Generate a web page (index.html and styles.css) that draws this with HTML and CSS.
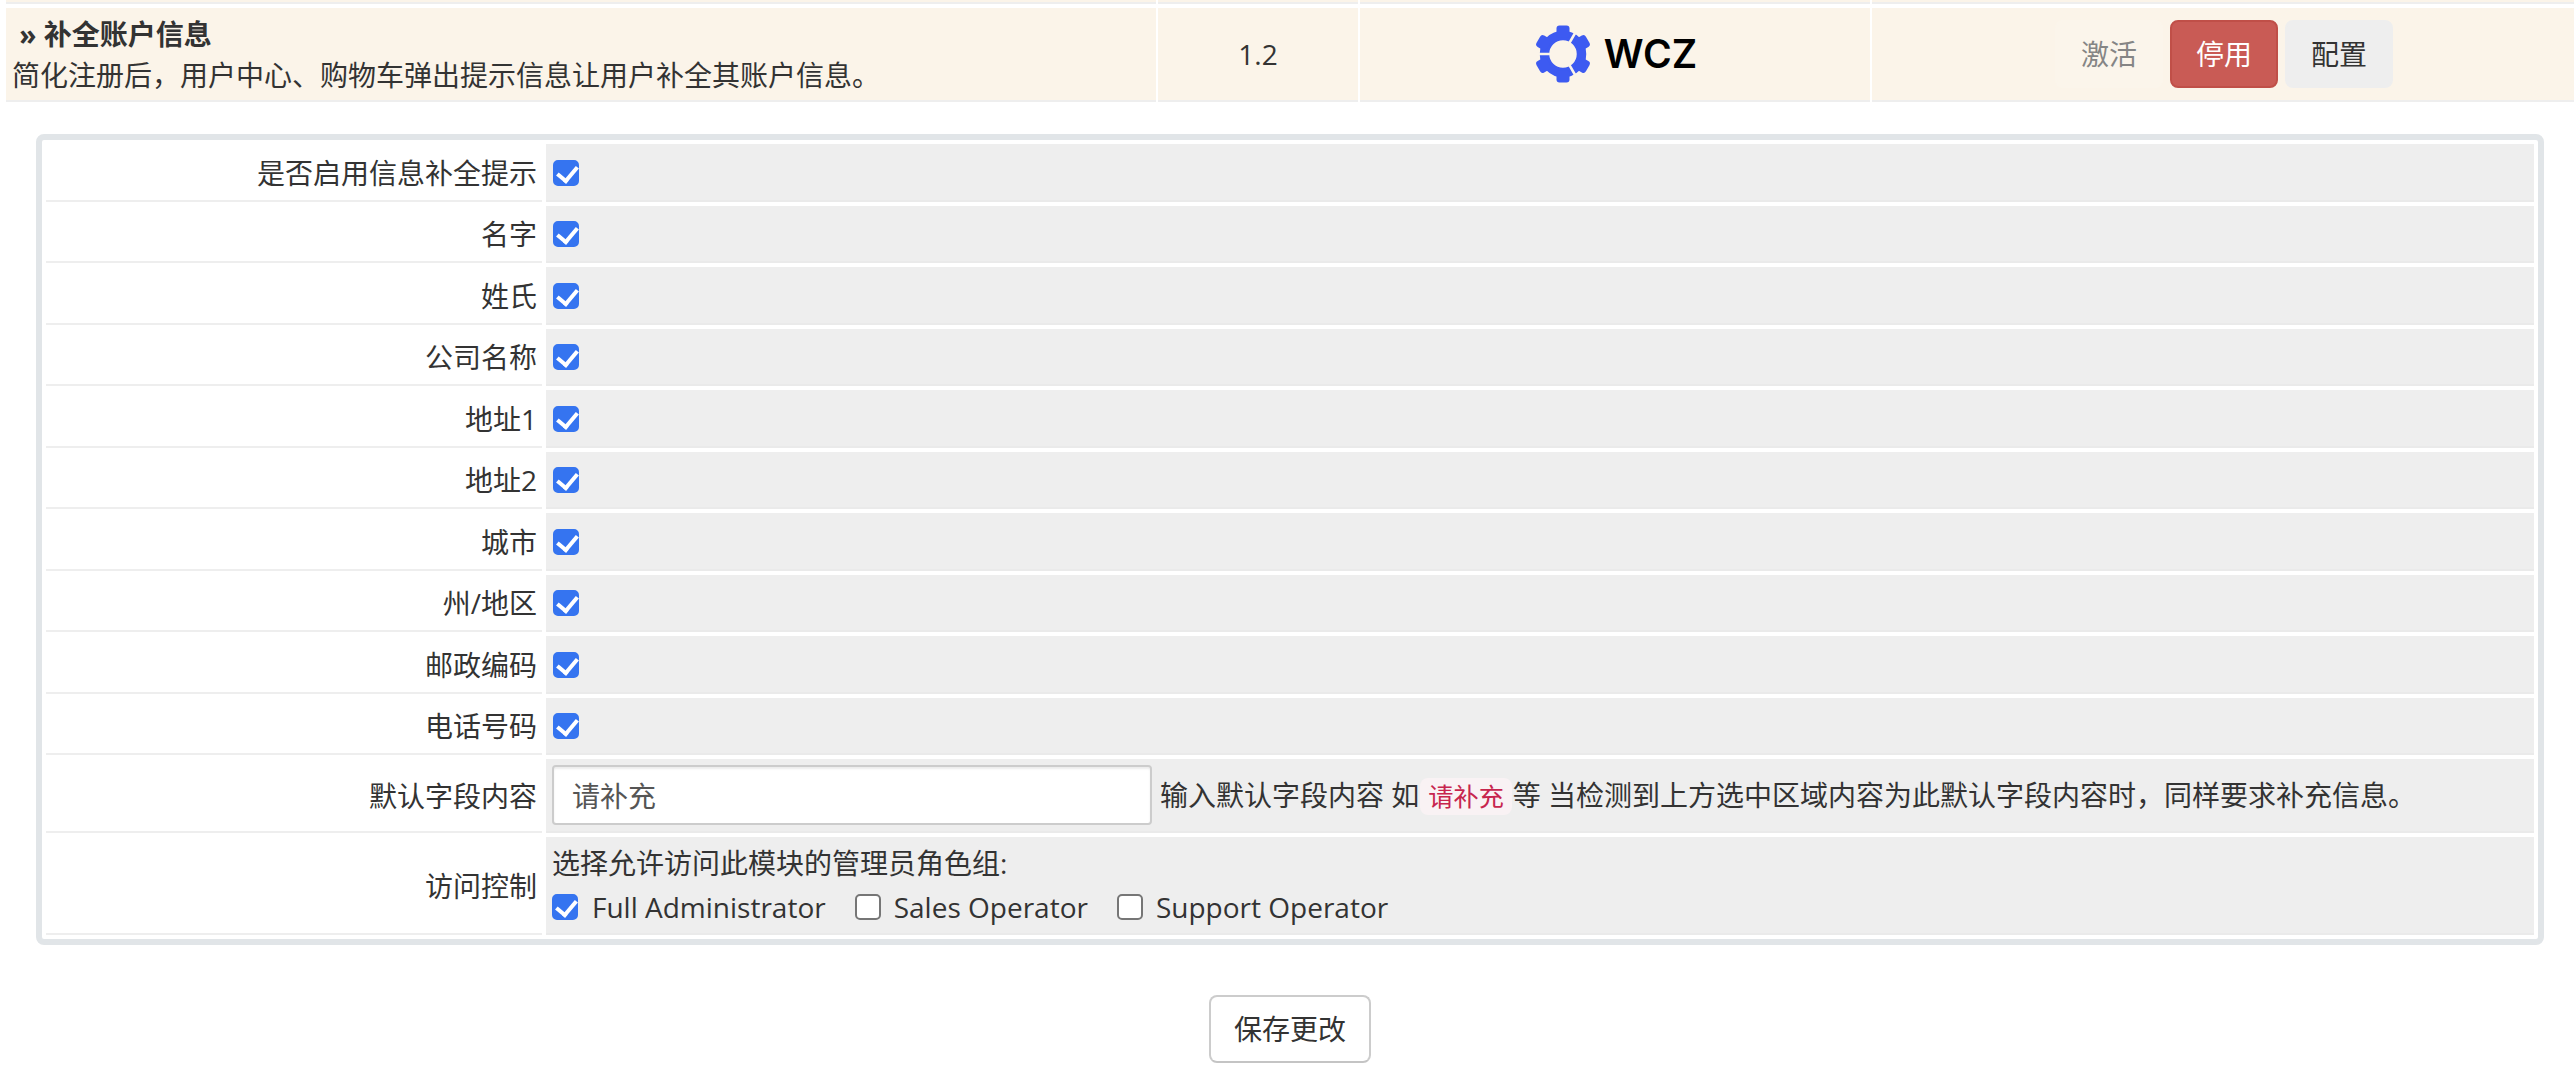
FILE: index.html
```html
<!DOCTYPE html>
<html lang="zh-CN">
<head>
<meta charset="utf-8">
<title>补全账户信息</title>
<link rel="stylesheet" href="styles.css">
</head>
<body>
<div class="module-row module-row-prev">
  <div class="cell"></div><div class="cell"></div><div class="cell"></div><div class="cell"></div>
</div>
<div class="module-row">
  <div class="cell cell-name">
    <div class="module-title">&nbsp;» 补全账户信息</div>
    <div class="module-desc">简化注册后，用户中心、购物车弹出提示信息让用户补全其账户信息。</div>
  </div>
  <div class="cell cell-center">1.2</div>
  <div class="cell cell-center cell-logo">
    <svg class="logo-gear" viewBox="-30 -30 60 60" width="60" height="60" aria-hidden="true">
      <circle class="gear-ring" r="18.5"/>
      <rect class="gear-tooth" x="-6.5" y="-28.5" width="13" height="12" rx="3"/>
      <rect class="gear-tooth" x="-6.5" y="-28.5" width="13" height="12" rx="3" transform="rotate(60)"/>
      <rect class="gear-tooth" x="-6.5" y="-28.5" width="13" height="12" rx="3" transform="rotate(120)"/>
      <rect class="gear-tooth" x="-6.5" y="-28.5" width="13" height="12" rx="3" transform="rotate(180)"/>
      <rect class="gear-tooth" x="-6.5" y="-28.5" width="13" height="12" rx="3" transform="rotate(240)"/>
      <rect class="gear-tooth" x="-6.5" y="-28.5" width="13" height="12" rx="3" transform="rotate(300)"/>
      <path class="gear-cut" d="M-30 0H-10M6 -10.4L15 -26M6 10.4L15 26"/>
    </svg>
    <span class="logo-text">WCZ</span>
  </div>
  <div class="cell cell-center cell-actions">
    <button class="btn btn-disabled" type="button">激活</button>
    <button class="btn btn-danger" type="button">停用</button>
    <button class="btn btn-default" type="button">配置</button>
  </div>
</div>

<form class="settings">
  <div class="panel">
    <div class="form-grid">
      <div class="label">是否启用信息补全提示</div>
      <div class="field"><input class="check" type="checkbox" checked></div>
      <div class="label">名字</div>
      <div class="field"><input class="check" type="checkbox" checked></div>
      <div class="label">姓氏</div>
      <div class="field"><input class="check" type="checkbox" checked></div>
      <div class="label">公司名称</div>
      <div class="field"><input class="check" type="checkbox" checked></div>
      <div class="label">地址1</div>
      <div class="field"><input class="check" type="checkbox" checked></div>
      <div class="label">地址2</div>
      <div class="field"><input class="check" type="checkbox" checked></div>
      <div class="label">城市</div>
      <div class="field"><input class="check" type="checkbox" checked></div>
      <div class="label">州/地区</div>
      <div class="field"><input class="check" type="checkbox" checked></div>
      <div class="label">邮政编码</div>
      <div class="field"><input class="check" type="checkbox" checked></div>
      <div class="label">电话号码</div>
      <div class="field"><input class="check" type="checkbox" checked></div>
      <div class="label">默认字段内容</div>
      <div class="field field-text">
        <input class="text-input" type="text" value="请补充">
        <span>输入默认字段内容 如<code class="code">请补充</code>等 当检测到上方选中区域内容为此默认字段内容时，同样要求补充信息。</span>
      </div>
      <div class="label">访问控制</div>
      <div class="field field-roles">
        <div class="roles-title">选择允许访问此模块的管理员角色组:</div>
        <div class="roles-list">
          <label class="role"><input class="check" type="checkbox" checked>Full Administrator</label>
          <label class="role"><input class="check" type="checkbox">Sales Operator</label>
          <label class="role"><input class="check" type="checkbox">Support Operator</label>
        </div>
      </div>
    </div>
  </div>
  <div class="save-row">
    <button class="btn btn-save" type="button">保存更改</button>
  </div>
</form>
</body>
</html>
```
FILE: styles.css
```css
* { box-sizing: border-box; }
html, body { margin: 0; padding: 0; background: #fff; }
body {
  font-family: "Open Sans", "Noto Sans CJK SC", sans-serif;
  font-size: 28px;
  line-height: 40px;
  color: #333;
  overflow: hidden;
}

.module-row {
  display: grid;
  grid-template-columns: 1150px 200px 510px 1fr;
  column-gap: 2px;
  margin-left: 6px;
  height: 94px;
}
.module-row-prev { height: 4px; margin-bottom: 4px; }
.cell {
  background: #fbf4e9;
  border-bottom: 2px solid #eee;
}
.cell-name {
  padding: 6px 6px 0;
}
.module-title { font-weight: 700; }
.module-desc { margin-top: 1px; }
.cell-center {
  display: flex;
  align-items: center;
  justify-content: center;
}

.logo-gear { flex: none; margin-right: 11px; }
.gear-ring { fill: none; stroke: #3d5af1; stroke-width: 9.5; }
.gear-tooth { fill: #3d5af1; }
.gear-cut { fill: none; stroke: #fbf4e9; stroke-width: 2.6; }
.logo-text {
  font-family: Inter, "Liberation Sans", sans-serif;
  font-size: 39px;
  font-weight: 600;
  color: #000;
}

.cell-actions { gap: 7px; padding-left: 2px; }

.btn {
  width: 108px;
  height: 68px;
  padding: 0;
  font: inherit;
  color: #333;
  border: 2px solid transparent;
  border-radius: 8px;
}
.btn-disabled { background: #fbf5eb; border-color: #fbf5eb; color: #858585; }
.btn-danger { background: #c95b55; border-color: #c04f48; color: #fff; }
.btn-default { background: #eee; border-color: #eee; }
.btn-save {
  width: 162px;
  background: #fff;
  border-color: #ccc;
  border-bottom-color: #c4c4c4;
}

.settings { display: block; padding: 0 30px 0 36px; }
.panel {
  margin-top: 32px;
  border: 6px solid #e1e5e8;
  border-radius: 8px;
  background: #fff;
}
.form-grid {
  display: grid;
  grid-template-columns: 496px 1fr;
  grid-template-rows: repeat(10, 57.5px) 74px 98px;
  gap: 4px;
  padding: 4px;
}
.label {
  display: flex;
  align-items: center;
  justify-content: flex-end;
  padding: 2px 5px 0 0;
  border-bottom: 2px solid #eee;
}
.field {
  display: flex;
  align-items: center;
  padding: 2px 0 0 7px;
  background: #eee;
  border-bottom: 2px solid #eaeaea;
}
.check {
  appearance: none;
  position: relative;
  flex: none;
  width: 26px;
  height: 26px;
  margin: 0;
  background: #fff;
  border: 2px solid #767676;
  border-radius: 5px;
}
.check:checked {
  background: #3574f0;
  border-color: #3574f0;
}
.check:checked::after {
  content: "";
  position: absolute;
  left: 6px;
  top: 0;
  width: 9px;
  height: 16px;
  border: solid #fff;
  border-width: 0 4px 4px 0;
  transform: rotate(40deg);
}
.field-text { gap: 8px; padding-top: 0; padding-left: 6px; }
.text-input {
  width: 600px;
  height: 60px;
  padding: 0 18px;
  font: inherit;
  color: #555;
  background: #fff;
  border: 2px solid #ccc;
  border-radius: 4px;
  box-shadow: inset 0 2px 2px rgba(0, 0, 0, .075);
}
.code {
  display: inline-block;
  margin: 0 1px;
  padding: 0 8px;
  font-family: inherit;
  font-size: 25.2px;
  line-height: 37px;
  color: #c7254e;
  background: #f9f2f4;
  border-radius: 8px;
}
.field-roles { flex-direction: column; align-items: flex-start; justify-content: center; gap: 4px; padding-top: 0; padding-left: 6px; }
.roles-list { display: flex; gap: 29px; }
.role { display: flex; align-items: center; gap: 13px; }
.role:first-child { gap: 14px; }

.save-row {
  display: flex;
  justify-content: center;
  margin-top: 50px;
}
```
